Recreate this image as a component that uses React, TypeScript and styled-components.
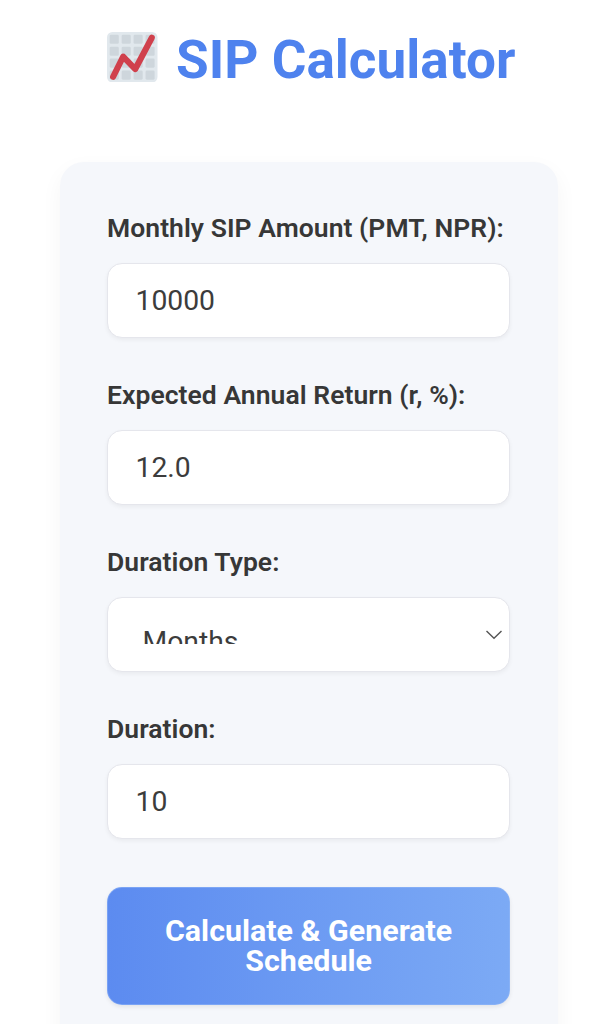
import React from "react";
import styled, { createGlobalStyle } from "styled-components";

const GlobalStyle = createGlobalStyle`
  * { box-sizing: border-box; }
  html, body { margin: 0; background: #ffffff; }
  body { height: 1024px; overflow: hidden; font-family: Roboto, "Noto Sans", sans-serif; color: #373737; }
`;

const Page = styled.main`
  height: 1024px;
  overflow: hidden;
  padding: 30px 55.5px 0 59.5px;
`;

const Header = styled.header`
  display: flex;
  height: 132px;
  padding-left: 47.5px;
  align-items: flex-start;
`;

const ChartIcon = styled.svg`
  width: 50.5px;
  height: 50.5px;
  margin: 1.8px 18.5px 0 0;
  flex: none;
`;

const Title = styled.h1`
  margin: 0;
  font-size: 53.1px;
  line-height: 60px;
  font-weight: 700;
  white-space: nowrap;
  color: #4e82ee;
`;

const Card = styled.form`
  height: 950px;
  padding: 48px 47.3px 0 47.5px;
  border-radius: 24px;
  background: #f5f7fb;
  box-shadow: 0 8px 22px rgba(0, 0, 0, 0.045);
`;

const Field = styled.div`
  height: 167px;
`;

const Label = styled.label`
  display: block;
  height: 53px;
  font-size: 26.5px;
  line-height: 36px;
  font-weight: 600;
  letter-spacing: 0.05px;
  white-space: nowrap;
`;

const Control = styled.div`
  display: flex;
  align-items: center;
  justify-content: space-between;
  height: 75px;
  border: 1px solid #e5e6ec;
  border-radius: 15px;
  background: #ffffff;
  box-shadow: 0 2px 4px rgba(0, 0, 0, 0.05);
`;

const Input = styled.input`
  width: 100%;
  height: 100%;
  padding: 0 27.5px;
  border: 0;
  outline: 0;
  background: transparent;
  color: #3c3c3c;
  font: 400 28.3px/34px Roboto, sans-serif;
`;

const Selected = styled.span`
  height: 19px;
  margin-left: 34.5px;
  overflow: hidden;
  color: #3c3c3c;
  font-size: 28.3px;
  line-height: 34px;
`;

const Chevron = styled.svg`
  width: 18px;
  height: 12px;
  margin-right: 6px;
`;

const Submit = styled.button`
  display: block;
  width: 100%;
  height: 118px;
  margin-top: 9px;
  padding: 0 40px;
  border: 1px solid rgba(150, 185, 248, 0.5);
  border-radius: 15px;
  background: linear-gradient(90deg, #5c8bf0, #7caaf5) border-box;
  box-shadow: 0 2px 4px rgba(0, 0, 0, 0.08);
  color: #ffffff;
  font: 700 30.4px/30.5px Roboto, sans-serif;
`;

const cells = [8, 43.5, 79, 114.5];

function TrendIcon() {
  return (
    <ChartIcon viewBox="0 0 150 150" aria-hidden="true">
      <rect width="150" height="150" rx="16" fill="#e1e8ed" />
      {cells.map((y) =>
        cells.map((x) => <rect key={`${x}-${y}`} x={x} y={y} width="27" height="27" rx="4" fill="#ced6dc" />)
      )}
      <path d="M18 133L48 73L84 110L133 17" fill="none" stroke="#d0404c" strokeWidth="18" strokeLinecap="round" strokeLinejoin="round" />
    </ChartIcon>
  );
}

function TextField({ label, value }: { label: string; value: string }) {
  return (
    <Field>
      <Label>{label}</Label>
      <Control>
        <Input defaultValue={value} aria-label={label} />
      </Control>
    </Field>
  );
}

export default function App() {
  return (
    <>
      <GlobalStyle />
      <Page>
        <Header>
          <TrendIcon />
          <Title>SIP Calculator</Title>
        </Header>
        <Card>
          <TextField label="Monthly SIP Amount (PMT, NPR):" value="10000" />
          <TextField label="Expected Annual Return (r, %):" value="12.0" />
          <Field>
            <Label>Duration Type:</Label>
            <Control>
              <Selected>Months</Selected>
              <Chevron viewBox="0 0 18 12" fill="none" stroke="#555555" strokeWidth="1.4">
                <path d="M1.5 2L9 9.3L16.5 2" />
              </Chevron>
            </Control>
          </Field>
          <TextField label="Duration:" value="10" />
          <Submit type="button">Calculate &amp; Generate Schedule</Submit>
        </Card>
      </Page>
    </>
  );
}
